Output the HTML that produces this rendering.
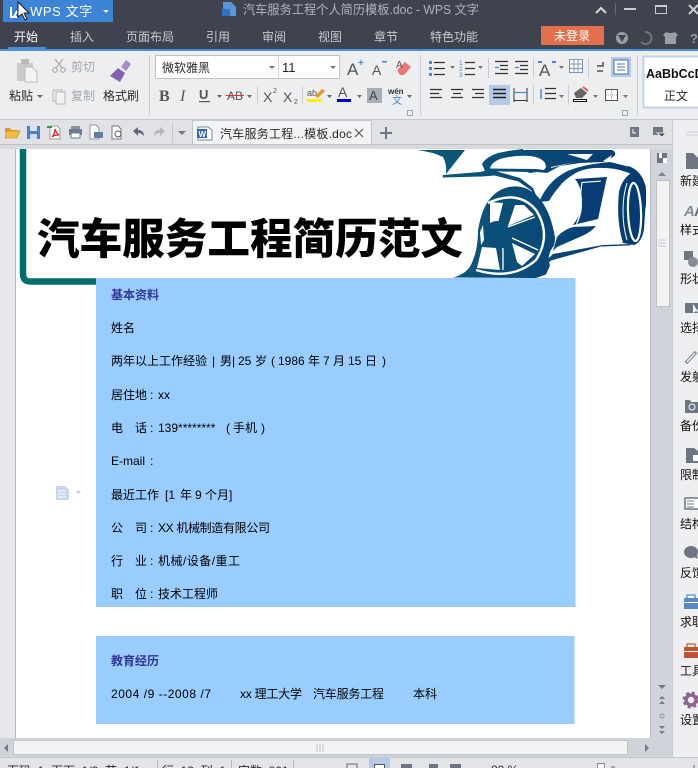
<!DOCTYPE html>
<html><head><meta charset="utf-8"><style>
html,body{margin:0;padding:0;background:#fff}
body{width:698px;height:768px;overflow:hidden}
svg{display:block}
text{font-family:"Liberation Sans","Noto Sans CJK SC",sans-serif;font-size:12px;white-space:pre}
.t{fill:#c6cad2}
.b{fill:#000}
.g{fill:#a4a7ab}
.r{fill:#2a2a2a}
.sep{fill:#c9ccd1}
.side{fill:#111}
</style></head><body>
<svg width="698" height="768" viewBox="0 0 698 768" xmlns="http://www.w3.org/2000/svg">
<defs>
<linearGradient id="car" gradientUnits="userSpaceOnUse" x1="420" y1="0" x2="640" y2="0"><stop offset="0" stop-color="#0a5c76"/><stop offset=".45" stop-color="#0a4c78"/><stop offset="1" stop-color="#033a72"/></linearGradient>
</defs>
<!-- title bar -->
<rect width="698" height="50" fill="#3f434d"/>
<rect x="3" y="0" width="110" height="22" fill="#3e84d6"/>
<path d="M11 7v10h6M14 17l3-6" stroke="#fff" stroke-width="2" fill="none"/>
<text x="30" y="16" style="font-size:13px;letter-spacing:.6px" fill="#fff">WPS 文字</text>
<path d="M103 10h6l-3 3z" fill="#e8eefa"/>
<path d="M18 2v15l4-3 3 6 2-1-3-6h5z" fill="#fff" stroke="#222" stroke-width="1"/>
<path d="M223 2h8l5 5v9h-13z" fill="#5a95dc"/><rect x="222" y="9" width="8" height="7" fill="#2f6fc6"/>
<text x="243" y="14" style="font-size:12.6px" fill="#aeb4be" textLength="236" lengthAdjust="spacingAndGlyphs">汽车服务工程个人简历模板.doc - WPS 文字</text>
<path d="M596 13l5-5 5 5" stroke="#d5d8de" stroke-width="2" fill="none"/>
<rect x="615" y="3" width="1" height="12" fill="#666b75"/>
<rect x="624" y="8" width="12" height="2" fill="#c8ccd3"/>
<rect x="655.500" y="5.500" width="11" height="8" fill="none" stroke="#c8ccd3"/><rect x="655" y="5" width="12" height="2" fill="#c8ccd3"/>
<path d="M689 5l9 9M698 5l-9 9" stroke="#c8ccd3" stroke-width="2"/>
<!-- tabs -->
<text x="14" y="41" fill="#fff">开始</text>
<text x="70" y="41" class="t">插入</text>
<text x="126" y="41" class="t">页面布局</text>
<text x="206" y="41" class="t">引用</text>
<text x="262" y="41" class="t">审阅</text>
<text x="318" y="41" class="t">视图</text>
<text x="374" y="41" class="t">章节</text>
<text x="430" y="41" class="t">特色功能</text>
<rect x="8" y="47" width="38" height="3" fill="#4a90d9"/>
<rect x="541" y="26" width="63" height="19" fill="#e2704d"/>
<text x="554" y="40" fill="#fff">未登录</text>
<circle cx="622" cy="38" r="6" fill="#9a9ea6"/><path d="M618 35h8l-4 7z" fill="#3f434d"/>
<path d="M645 32a6 6 0 1 1-4 10" stroke="#6f747d" stroke-width="2" fill="none"/>
<path d="M666 32l3 1h3l3-1 3 3-2 2v7h-11v-7l-2-2z" fill="#9a9ea6"/>
<text x="690" y="43" style="font-size:13px;font-weight:bold" fill="#9a9ea6">?</text>
<rect y="49" width="698" height="2" fill="#4c90da"/>
<!-- ribbon -->
<rect y="51" width="698" height="68" fill="#eceef0"/>
<rect y="119" width="698" height="1" fill="#c5c8cd"/>
<!-- clipboard -->
<path d="M17 63h16v18h-16z" fill="#c8cacc"/><rect x="21" y="59" width="8" height="5" fill="#b8babc"/>
<path d="M25 67h7l5 5v10h-12z" fill="#f4f4f4" stroke="#bcbec0"/>
<path d="M55 59l7 9M63 59l-7 9" stroke="#aaa" stroke-width="1.3"/><circle cx="55" cy="70" r="2.300" fill="none" stroke="#aaa" stroke-width="1.200"/><circle cx="63" cy="70" r="2.300" fill="none" stroke="#aaa" stroke-width="1.200"/>
<text x="71" y="71" class="g">剪切</text>
<rect x="53" y="90" width="9" height="11" fill="#eee" stroke="#b5b5b5"/><rect x="56" y="92" width="9" height="12" fill="#f2f2f2" stroke="#b5b5b5"/>
<text x="71" y="100" class="g">复制</text>
<text x="9" y="100" class="r">粘贴</text><path d="M37 95h6l-3 3z" fill="#666"/>
<path d="M126 60l5 4-5 7-5-4z" fill="#a58bc9"/><path d="M118 68l7 5-5 9-10-6z" fill="#8461b4"/>
<text x="103" y="100" class="r">格式刷</text>
<rect x="149" y="55" width="1" height="60" class="sep"/>
<!-- font -->
<rect x="155.500" y="55.500" width="184" height="23" fill="#fff" stroke="#bfc2c6"/>
<rect x="278" y="56" width="1" height="22" fill="#d0d2d5"/>
<text x="162" y="72" class="r">微软雅黑</text><path d="M269 66h6l-3 3z" fill="#777"/>
<text x="282" y="72" fill="#222" style="font-size:13px">11</text><path d="M330 66h6l-3 3z" fill="#777"/>
<text x="347" y="75" style="font-size:17px" fill="#555">A</text><text x="358" y="66" style="font-size:10px;font-weight:bold" fill="#4a86d8">+</text>
<text x="372" y="75" style="font-size:14px" fill="#555">A</text><rect x="382" y="61" width="5" height="1.500" fill="#4a86d8"/>
<path d="M397 70l8-8 6 5-7 8h-4z" fill="#ef7676"/><text x="396" y="68" style="font-size:10px" fill="#555">A</text>
<text x="159" y="101" style="font-size:16px;font-weight:bold;font-family:'Liberation Serif'" fill="#555">B</text>
<text x="180" y="101" style="font-size:16px;font-style:italic;font-family:'Liberation Serif'" fill="#555">I</text>
<text x="199" y="99" style="font-size:13px;font-weight:bold" fill="#555">U</text><rect x="199" y="101" width="11" height="1.200" fill="#555"/><path d="M217 95h5l-2.500 3z" fill="#666"/>
<text x="227" y="100" style="font-size:12px" fill="#555">AB</text><rect x="226" y="95" width="18" height="1" fill="#d33"/><path d="M247 95h5l-2.500 3z" fill="#666"/>
<rect x="257" y="86" width="1" height="18" class="sep"/>
<text x="263" y="102" style="font-size:14px" fill="#555">X</text><text x="273" y="93" style="font-size:7px" fill="#555">2</text>
<text x="283" y="102" style="font-size:14px" fill="#555">X</text><text x="294" y="104" style="font-size:7px" fill="#555">2</text>
<rect x="302" y="86" width="1" height="18" class="sep"/>
<text x="307" y="96" style="font-size:9px" fill="#555">ab</text><path d="M315 96l7-7 3 2-7 7z" fill="#ee9433"/><rect x="307" y="99" width="15" height="3" fill="#ffee00"/><path d="M327 95h5l-2.500 3z" fill="#666"/>
<text x="338" y="97" style="font-size:14px" fill="#555">A</text><rect x="337" y="99" width="14" height="3" fill="#0000d0"/><path d="M357 95h5l-2.500 3z" fill="#666"/>
<rect x="367" y="88" width="15" height="15" fill="#a6aeba"/><text x="369" y="100" style="font-size:13px" fill="#444">A</text>
<text x="388" y="94" style="font-size:8px;font-weight:bold" fill="#333">wén</text><text x="392" y="104" style="font-size:10px" fill="#4a86d8">文</text><path d="M407 95h5l-2.500 3z" fill="#666"/>
<rect x="407.500" y="110.500" width="5" height="5" fill="none" stroke="#9aa"/>
<rect x="420" y="55" width="1" height="60" class="sep"/>
<!-- paragraph -->
<path d="M429 61h3v3h-3zM429 67h3v3h-3zM429 73h3v3h-3z" fill="#4a86d8"/>
<path d="M434 62.500h11M434 68.500h11M434 74.500h11" stroke="#333" stroke-width="1.300"/>
<path d="M450 66h5l-2.500 3z" fill="#777"/>
<text x="459" y="65" style="font-size:6.500px" fill="#4a86d8">1</text><text x="459" y="71" style="font-size:6.500px" fill="#4a86d8">2</text><text x="459" y="77" style="font-size:6.500px" fill="#4a86d8">3</text>
<path d="M465 62.500h10M465 68.500h10M465 74.500h10" stroke="#333" stroke-width="1.300"/>
<path d="M478 66h5l-2.500 3z" fill="#777"/>
<rect x="488" y="58" width="1" height="20" class="sep"/>
<path d="M495 61.500h13M500 65.500h8M500 69.500h8M495 73.500h13" stroke="#333" stroke-width="1.300"/><path d="M495 67.500h4" stroke="#4a86d8" stroke-width="1.300"/>
<path d="M515 61.500h13M520 65.500h8M520 69.500h8M515 73.500h13" stroke="#333" stroke-width="1.300"/><path d="M515 67.500h4" stroke="#4a86d8" stroke-width="1.300"/>
<rect x="533" y="58" width="1" height="20" class="sep"/>
<text x="539" y="76" style="font-size:17px" fill="#555">A</text><path d="M538 62h4M552 62h4" stroke="#4a86d8" stroke-width="2"/>
<path d="M559 66h5l-2.500 3z" fill="#777"/>
<path d="M569.500 59.500h13v13h-13zM569.500 64h13M569.500 68.500h13M574 59.500v13M578 59.500v13" fill="#fff" stroke="#7d95bd"/>
<rect x="588" y="58" width="1" height="20" class="sep"/>
<path d="M603 62v4h-6M597 71h6" stroke="#333" stroke-width="1.300" fill="none"/>
<rect x="611" y="57" width="20" height="20" fill="#b4c8ea"/><rect x="614" y="60" width="14" height="14" fill="#fff" stroke="#4a6fa8"/><path d="M617 64h8M617 67h8M617 70h8" stroke="#4a6fa8"/>
<path d="M430 89.500h12M430 93.500h9M430 97.500h12" stroke="#333" stroke-width="1.300"/>
<path d="M451 89.500h12M453 93.500h8M451 97.500h12" stroke="#333" stroke-width="1.300"/>
<path d="M472 89.500h12M475 93.500h9M472 97.500h12" stroke="#333" stroke-width="1.300"/>
<rect x="489" y="85" width="21" height="20" fill="#b5c9ea"/>
<path d="M493 89.500h13M493 93.500h13M493 97.500h13" stroke="#222" stroke-width="1.400"/>
<path d="M514 88v14M527 88v14" stroke="#333"/><path d="M514 92.500h13" stroke="#4a86d8" stroke-width="1.200"/><path d="M514 100.500h13" stroke="#333"/>
<rect x="533" y="85" width="1" height="20" class="sep"/>
<path d="M545 88.500h11M545 93.500h11M545 98.500h11" stroke="#333" stroke-width="1.300"/><path d="M541 89v10" stroke="#4a86d8" stroke-width="1.500"/>
<path d="M559 95h5l-2.500 3z" fill="#777"/>
<rect x="568" y="85" width="1" height="20" class="sep"/>
<path d="M574 93l7-5 6 5-5 5h-6z" fill="#666"/><path d="M583 87l5 4" stroke="#e55" stroke-width="2"/><rect x="573.500" y="99.500" width="13" height="2" fill="#fff" stroke="#111"/>
<path d="M593 95h5l-2.500 3z" fill="#777"/>
<rect x="605.500" y="89.500" width="12" height="11" fill="#fff" stroke="#555"/><path d="M611.500 90v10M606 95h11" stroke="#999" stroke-dasharray="1 1"/>
<path d="M623 95h5l-2.500 3z" fill="#777"/>
<rect x="622.500" y="110.500" width="5" height="5" fill="none" stroke="#9aa"/>
<rect x="637" y="55" width="1" height="60" class="sep"/>
<rect x="643.500" y="56.500" width="60" height="51" fill="#fff" stroke="#c3d2ea" stroke-width="2"/>
<text x="646" y="78" style="font-size:12.5px;font-weight:bold" fill="#111">AaBbCcD</text>
<text x="664" y="100" class="r">正文</text>
<!-- quick bar -->
<rect y="120" width="698" height="26" fill="#e0e2e6"/>
<rect y="144" width="672" height="1" fill="#bfc2c7"/>
<path d="M5 128h5l1 2h7v3h-13z" fill="#d99a26"/><path d="M5 138l2-7h13l-3 7z" fill="#f2bc3e" stroke="#c98d20" stroke-width=".6"/>
<rect x="27" y="126" width="13" height="13" fill="#4d7fc8"/><rect x="30" y="126" width="7" height="5" fill="#d8e4f6"/><rect x="30" y="134" width="7" height="5" fill="#cfdcf1"/>
<path d="M50 126h7l3 3v10h-10z" fill="#fff" stroke="#888" stroke-width=".8"/><path d="M52 137c2-2 3-6 3-8 1 3 2 5 4 6-3 0-5 0-7 2z" fill="none" stroke="#d22" stroke-width="1.200"/><path d="M47 127h5" stroke="#2a9a4a" stroke-width="2"/>
<rect x="71" y="126" width="9" height="3" fill="#8b93a0"/><rect x="69" y="129" width="13" height="6" fill="#6d7c93"/><rect x="71" y="133" width="9" height="5" fill="#fff" stroke="#6d7c93"/>
<path d="M90 125h6l3 3v11h-9z" fill="#fff" stroke="#8f95a0"/><rect x="94" y="132" width="9" height="6" fill="#5f7fa8"/>
<path d="M112 126h6l3 3v10h-9z" fill="#fff" stroke="#777"/><circle cx="118" cy="134" r="3" fill="none" stroke="#555"/>
<path d="M133 131l5-4v3c4 0 6 2 6 6-2-2-3-3-6-3v3z" fill="#5f6b7b"/>
<path d="M165 131l-5-4v3c-4 0-6 2-6 6 2-2 3-3 6-3v3z" fill="#b4b7bb"/>
<rect x="172" y="122" width="1" height="21" fill="#c5c7cb"/>
<path d="M178 131h8l-4 4z" fill="#777"/>
<rect x="192.500" y="120.500" width="179" height="24" fill="#f2f3f5" stroke="#c4c7cc"/>
<path d="M198 127h10l4 3v10h-14z" fill="#fff" stroke="#7a8798"/><rect x="197" y="129" width="10" height="9" fill="#3465ad"/><text x="198.500" y="137" style="font-size:8px;font-weight:bold" fill="#fff">W</text>
<text x="220" y="138" class="r" textLength="132">汽车服务工程...模板.doc</text>
<path d="M355 129l8 8M363 129l-8 8" stroke="#555" stroke-width="1.200"/>
<path d="M380 133h12M386 127v12" stroke="#6c7683" stroke-width="2"/>
<rect x="630" y="127" width="9" height="10" fill="#6f7682"/><path d="M633 129v4h3" stroke="#fff" fill="none"/>
<rect x="653" y="127" width="10" height="8" fill="#6f7682"/><path d="M657 133h9l-4 4z" fill="#444" stroke="#e0e2e6"/>
<!-- doc area -->
<rect y="145" width="698" height="595" fill="#e7e8eb"/>
<rect y="145" width="672" height="4" fill="#d8dade"/>
<rect x="15" y="149" width="1" height="589" fill="#b6b6b8"/>
<rect x="16" y="149" width="634" height="589" fill="#fff"/>
<rect x="650" y="149" width="23" height="591" fill="#d0d3da"/>
<rect y="738" width="673" height="3" fill="#d0d3da"/>
<rect x="650" y="149" width="1" height="589" fill="#b8bbc2"/>
<!-- teal frame -->
<path d="M23 149V274q0 7.500 7.500 7.500H96" fill="none" stroke="#006d6d" stroke-width="6.500"/>
<!-- car -->
<g fill="url(#car)">
<!-- teal wedge -->
<path d="M417 150h48l-19 24q1-10-3-17-10-5-26-7z"/>
<!-- roof band with window frame -->
<path d="M523 150H612q6 3 1 7l-10 5-23 1-20 3-13 7-10-1-7 1-3-1-42-1-3-7q4-7 16-11 14-3 25-4z"/>
<!-- hood line -->
<path d="M443 175l37-3 12-3 3 2 25 7 13 10 6 14-1.500.5-6-12-13-9-24-6-12 1-40 1z"/>
<!-- body top line -->
<path d="M539 202q5-12 14-21 10-9 20-12 15-5 37-7l20 5q9 4 13 12l3 8-3 2-3-7q-6-8-14-10-12-5-32-4-12 1-20 6-10 6-15 13-6 7-10 14z"/>
<!-- wheel arch, hub body -->
<path d="M453 277.500q15-4 19-15 6-13 6-32 4-25 15-35 10-10 25-9 13 1 23 14 10 13 14 37 0 4-1 8-8 10-4 20l-4 9-10 3.500z"/>
<path d="M557 237q6-7 16-10l23-1q-5 6-14 10l-25 11-4 4z"/>
<path d="M553 254l50-9 30-1-4 1.500-28 1-50 14-8 8-7 8-10 3z"/>
<!-- rear -->
<path d="M633 172q-11 6-14 20-3 28 4 51l11 2q8-3 10-16l2-32q0-15-13-25z"/>
<path d="M628 166q14 4 18 23v20l-2-18q-3-16-16-24z"/>
</g>
<!-- window -->
<path d="M490 168q2-6 10-9 14-4 30-3 11 1 15 7l1 4-2 3-8-1-46-.5z" fill="#fff"/>
<path d="M493 170h44v1l-44 .5z" fill="url(#car)"/>
<!-- wedge sliver -->
<path d="M452 172l18-22h2l-18 22z" fill="#fff" opacity="0"/>
<!-- top slivers -->
<path d="M567 154l20 6 6-6z" fill="#fff"/><path d="M603 161l9-6-3 6z" fill="#fff"/><path d="M551 167l24-5-24 6z" fill="#fff"/>
<!-- door window -->
<path d="M575 179l32-2-9 42-25 6q6-8 8-16 2-8 0-16-1-8-6-14z" fill="#073c74"/>
<path d="M581 182l20-1.500-.5 1.200-18 1.300q-2 12-.5 24-1 10-5 17l-1-.5q3-7 4.500-16-1.500-12 1-25.500z" fill="#fff"/>
<!-- rear details -->
<ellipse cx="634.500" cy="212" rx="6.500" ry="29" fill="none" stroke="#fff" stroke-width="2.200" transform="rotate(-2 634 212)"/>
<path d="M627 183q-4 12-4 28 0 16 4 29" fill="none" stroke="#fff" stroke-width="1"/>
<!-- wheel ring -->
<path d="M488 203q30-14 48 7 16 25 0 50-24 21-60 10" fill="none" stroke="#fff" stroke-width="2.400"/>
<path d="M490 202l13 1-5 20-8 2zM508 226l26-11-10-10-9 0zM512 243l23 11-13 12-5-4zM482 247l14 1 4 22-23-2zM483 225l1 15-3 5-1-13z" fill="#fff"/>
<path d="M505 228l30-11M512 238l26 12M503 248v22" stroke="#fff" stroke-width="1.300"/>
<circle cx="497" cy="234" r="13" fill="#0a4f78"/>
<!-- title -->
<text x="37" y="254" style="font-size:42.600px;font-weight:900;font-family:'Noto Sans CJK SC',sans-serif" fill="#000">汽车服务工程简历范文</text>
<!-- blue boxes -->
<rect x="96" y="278" width="479.500" height="329" fill="#99ccff"/>
<rect x="96" y="636" width="478.500" height="88" fill="#99ccff"/>
<text x="111" y="299" style="font-weight:bold" fill="#333399">基本资料</text>
<text x="111" y="332" class="b">姓名</text>
<g class="b">
<text x="111" y="365">两年以上工作经验</text><text x="212" y="365">|</text><text x="220" y="365">男|</text><text x="238" y="365">25</text><text x="255" y="365">岁</text><text x="271" y="365">(</text><text x="278" y="365">1986</text><text x="308" y="365">年</text><text x="323" y="365">7</text><text x="333" y="365">月</text><text x="348" y="365">15</text><text x="365" y="365">日</text><text x="382" y="365">)</text>
<text x="111" y="399">居住地</text><text x="150" y="399">:</text><text x="158" y="399">xx</text>
<text x="111" y="432">电</text><text x="135" y="432">话</text><text x="150" y="432">:</text><text x="158" y="432">139********</text><text x="226" y="432">(</text><text x="233" y="432">手机</text><text x="261" y="432">)</text>
<text x="111" y="465">E-mail</text><text x="150" y="465">:</text>
<text x="111" y="499">最近工作</text><text x="165" y="499">[1</text><text x="180" y="499">年</text><text x="195" y="499">9</text><text x="205" y="499">个月]</text>
<text x="111" y="532">公</text><text x="135" y="532">司</text><text x="150" y="532">:</text><text x="158" y="532" textLength="112">XX 机械制造有限公司</text>
<text x="111" y="565">行</text><text x="135" y="565">业</text><text x="150" y="565">:</text><text x="158" y="565" textLength="82">机械/设备/重工</text>
<text x="111" y="598">职</text><text x="135" y="598">位</text><text x="150" y="598">:</text><text x="158" y="598">技术工程师</text>
<text x="111" y="698" textLength="100">2004 /9 --2008 /7</text>
<text x="240" y="698" textLength="62">xx 理工大学</text>
<text x="313" y="698" textLength="71">汽车服务工程</text>
<text x="413" y="698">本科</text>
</g>
<text x="111" y="665" style="font-weight:bold" fill="#333399">教育经历</text>
<!-- margin doc icon -->
<path d="M56 486h9l4 4v10h-13z" fill="#c7d6ea"/><path d="M58 491h8M58 494h8M58 497h8" stroke="#fff"/>
<path d="M76 491h5l-2.500 3z" fill="#c4c8ce"/>
<!-- v scrollbar -->
<rect x="657" y="153" width="10" height="10" fill="#6f7682"/><rect x="659" y="153" width="3" height="5" fill="#fff"/><rect x="663" y="158" width="4" height="5" fill="#fff"/>
<path d="M658 176l4-4 4 4z" fill="#7b8494"/>
<rect x="656.500" y="180.500" width="13" height="126" fill="#f3f3f3" stroke="#bfc2c8"/>
<path d="M658 240h8M658 243h8M658 246h8" stroke="#c8cbd0"/>
<path d="M658 685h8l-4 4z" fill="#6f7a8c"/>
<path d="M659 699l3-3 3 3zM659 704l3-3 3 3z" fill="#6f7a8c"/>
<circle cx="662" cy="716" r="2" fill="none" stroke="#8a92a0"/>
<path d="M659 728l3 3 3-3zM659 733l3 3 3-3z" fill="#6f7a8c" transform="translate(0 -2)"/>
<!-- h scrollbar -->
<rect y="740" width="673" height="18" fill="#d0d3da"/>
<path d="M8 744v8l-4-4z" fill="#6f7a8c"/>
<rect x="13.500" y="740.500" width="614" height="14" fill="#f3f3f3" stroke="#bfc2c8"/>
<path d="M317 744v8M320 744v8M323 744v8" stroke="#c0c3c8"/>
<path d="M645 744v8l4-4z" fill="#6f7a8c"/>
<!-- side panel -->
<rect x="673" y="120" width="25" height="638" fill="#edeff1"/>
<rect x="672" y="120" width="1" height="638" fill="#c9ccd1"/>
<path d="M686 132h12M686 135h12" stroke="#cfd2d6"/>
<path d="M686 153h7l5 5v11h-12z" fill="#6d7482"/>
<text x="680" y="185" class="side">新建</text>
<text x="684" y="216" style="font-size:15px;font-style:italic;font-weight:bold" fill="#868c97">A</text><text x="694" y="216" style="font-size:15px;font-weight:bold" fill="#6d7482">A</text>
<text x="680" y="234" class="side">样式</text>
<rect x="684" y="251" width="9" height="9" fill="#6d7482"/><circle cx="693" cy="262" r="5" fill="#868c97"/>
<text x="680" y="283" class="side">形状</text>
<rect x="685" y="303" width="14" height="10" fill="#6d7482"/><path d="M693 304v9l3-2 3 2z" fill="#fff"/>
<text x="680" y="332" class="side">选择</text>
<path d="M686 363l10-11" stroke="#7c8490" stroke-width="3.500" fill="none"/><path d="M687 362l8-9" stroke="#edeff1" stroke-width="1.500"/>
<text x="680" y="381" class="side">发射</text>
<path d="M685 400h5l1 2h7v10h-13z" fill="#6d7482"/><circle cx="692" cy="407" r="3" fill="none" stroke="#fff"/><rect x="685" y="412" width="13" height="1" fill="#6d7482"/>
<text x="680" y="430" class="side">备份</text>
<path d="M686 448h8l4 3v12h-12z" fill="#6d7482"/><rect x="693" y="455" width="5" height="6" fill="#fff"/>
<text x="680" y="479" class="side">限制</text>
<rect x="685" y="498" width="14" height="11" fill="#fff" stroke="#6d7482" stroke-width="1.500"/><path d="M687 501h7M687 504h7M687 507h7" stroke="#6d7482"/>
<text x="680" y="528" class="side">结构</text>
<ellipse cx="691" cy="552" rx="7" ry="6" fill="#6d7482"/><path d="M697 555l1 4-4-2z" fill="#6d7482"/>
<text x="680" y="577" class="side">反馈</text>
<rect x="684" y="598" width="14" height="11" fill="#5b86c6"/><rect x="687" y="595" width="8" height="4" fill="none" stroke="#5b86c6" stroke-width="1.200"/><rect x="684" y="602" width="14" height="1" fill="#fff"/>
<text x="680" y="626" class="side">求职</text>
<rect x="684" y="647" width="14" height="11" fill="#bf5435"/><rect x="687" y="644" width="8" height="4" fill="none" stroke="#bf5435" stroke-width="1.200"/><rect x="684" y="651" width="14" height="1" fill="#fff"/>
<text x="680" y="675" class="side">工具</text>
<circle cx="691" cy="700" r="5" fill="none" stroke="#8d6391" stroke-width="3.500"/><circle cx="691" cy="700" r="7.500" fill="none" stroke="#8d6391" stroke-width="2" stroke-dasharray="3 3"/>
<text x="680" y="724" class="side">设置</text>
<!-- status bar -->
<rect y="757" width="698" height="11" fill="#e2e4e8"/>
<rect y="757" width="698" height="1" fill="#c5c8cd"/>
<text x="7" y="775" class="r">页码: 1  页面: 1/2  节: 1/1</text>
<rect x="157" y="760" width="1" height="8" fill="#bbb"/>
<text x="162" y="775" class="r">行: 13  列: 1</text>
<rect x="231" y="760" width="1" height="8" fill="#bbb"/>
<text x="238" y="775" class="r">字数: 801</text>
<rect x="293" y="760" width="1" height="8" fill="#bbb"/>
<path d="M347 764h10v5h-10z" fill="none" stroke="#666"/>
<rect x="369" y="758" width="21" height="10" fill="#b5c9ea"/><rect x="374.500" y="764.500" width="10" height="5" fill="#fff" stroke="#555"/>
<rect x="401" y="764" width="11" height="4" fill="#6d7482"/>
<rect x="429" y="764" width="9" height="4" fill="#6d7482"/>
<rect x="450" y="764" width="11" height="4" fill="#6d7482"/>
<text x="491" y="774" class="r">80 %</text>
<rect x="597.500" y="763.500" width="7" height="6" fill="#f6f6f6" stroke="#888"/>
<path d="M611 767h4M694 765v3" stroke="#666"/>
</svg>
</body></html>
